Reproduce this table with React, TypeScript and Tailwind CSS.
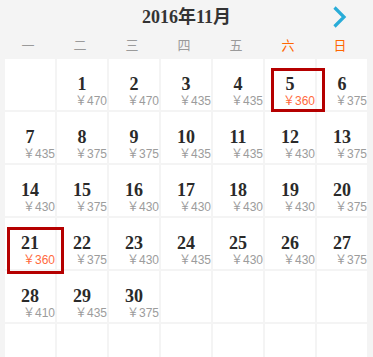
import React from "react";

type Day = { d: number; p: number; hl?: { l: number; t: number; w: number; h: number } } | null;

const prices: Record<number, number> = {
  1: 470, 2: 470, 3: 435, 4: 435, 5: 360, 6: 375,
  7: 435, 8: 375, 9: 375, 10: 435, 11: 435, 12: 430, 13: 375,
  14: 430, 15: 375, 16: 430, 17: 430, 18: 430, 19: 430, 20: 375,
  21: 360, 22: 375, 23: 430, 24: 435, 25: 430, 26: 430, 27: 375,
  28: 410, 29: 435, 30: 375,
};

const highlights: Record<number, { l: number; t: number; w: number; h: number }> = {
  5: { l: 6, t: 9, w: 54, h: 44 },
  21: { l: 2, t: 9, w: 57, h: 47 },
};

const cells: Day[] = [];
cells.push(null);
for (let i = 1; i <= 30; i++) cells.push({ d: i, p: prices[i], hl: highlights[i] });
while (cells.length < 42) cells.push(null);

const weekdays = ["一", "二", "三", "四", "五", "六", "日"];

const serif = { fontFamily: '"Liberation Serif", "Noto Sans CJK SC", serif' };
const sans = { fontFamily: '"Noto Sans CJK SC", "Noto Sans", sans-serif' };
const priceFont = { fontFamily: '"Liberation Sans", "Noto Sans CJK SC", sans-serif' };

export default function App() {
  return (
    <div className="w-[373px] h-[357px] overflow-hidden bg-[#f4f4f4] relative">
      <div className="relative h-[30px] flex justify-center pt-[8px]">
        <div
          className="text-[18px] leading-[18px] font-bold text-[#333]"
          style={serif}
        >
          2016年11月
        </div>
        <svg
          className="absolute left-[330px] top-[4px]"
          width="20"
          height="26"
          viewBox="0 0 20 26"
        >
          <path
            d="M4.5 3.5 L14 13 L4.5 22.5"
            fill="none"
            stroke="#29acd8"
            strokeWidth="3.2"
          />
        </svg>
      </div>
      <div className="grid grid-cols-[repeat(7,50px)] gap-x-[2px] pl-[3px] h-[29px] items-center">
        {weekdays.map((w, i) => (
          <div
            key={w}
            className={`text-center text-[13px] leading-[13px] ${
              i >= 5 ? "text-[#ff6600]" : "text-[#9a9a9a]"
            }`}
            style={sans}
          >
            {w}
          </div>
        ))}
      </div>
      <div className="grid grid-cols-[repeat(7,50px)] auto-rows-[51px] gap-[2px] pl-[5px]">
        {cells.map((c, i) => (
          <div key={i} className="bg-white relative">
            {c && (
              <div className="flex flex-col pt-[18px]">
                <div
                  className="text-center text-[18px] leading-[14px] font-bold text-[#2a2a2a]"
                  style={serif}
                >
                  {c.d}
                </div>
                <div
                  className={`pl-[18px] text-[12px] leading-[12px] mt-[4px] whitespace-nowrap ${
                    c.hl ? "text-[#ff6a3d]" : "text-[#9c9c9c]"
                  }`}
                  style={priceFont}
                >
                  ￥{c.p}
                </div>
              </div>
            )}
            {c && c.hl && (
              <div
                className="absolute z-10 border-[3px] border-[#b50000]"
                style={{ left: c.hl.l, top: c.hl.t, width: c.hl.w, height: c.hl.h }}
              />
            )}
          </div>
        ))}
      </div>
    </div>
  );
}
